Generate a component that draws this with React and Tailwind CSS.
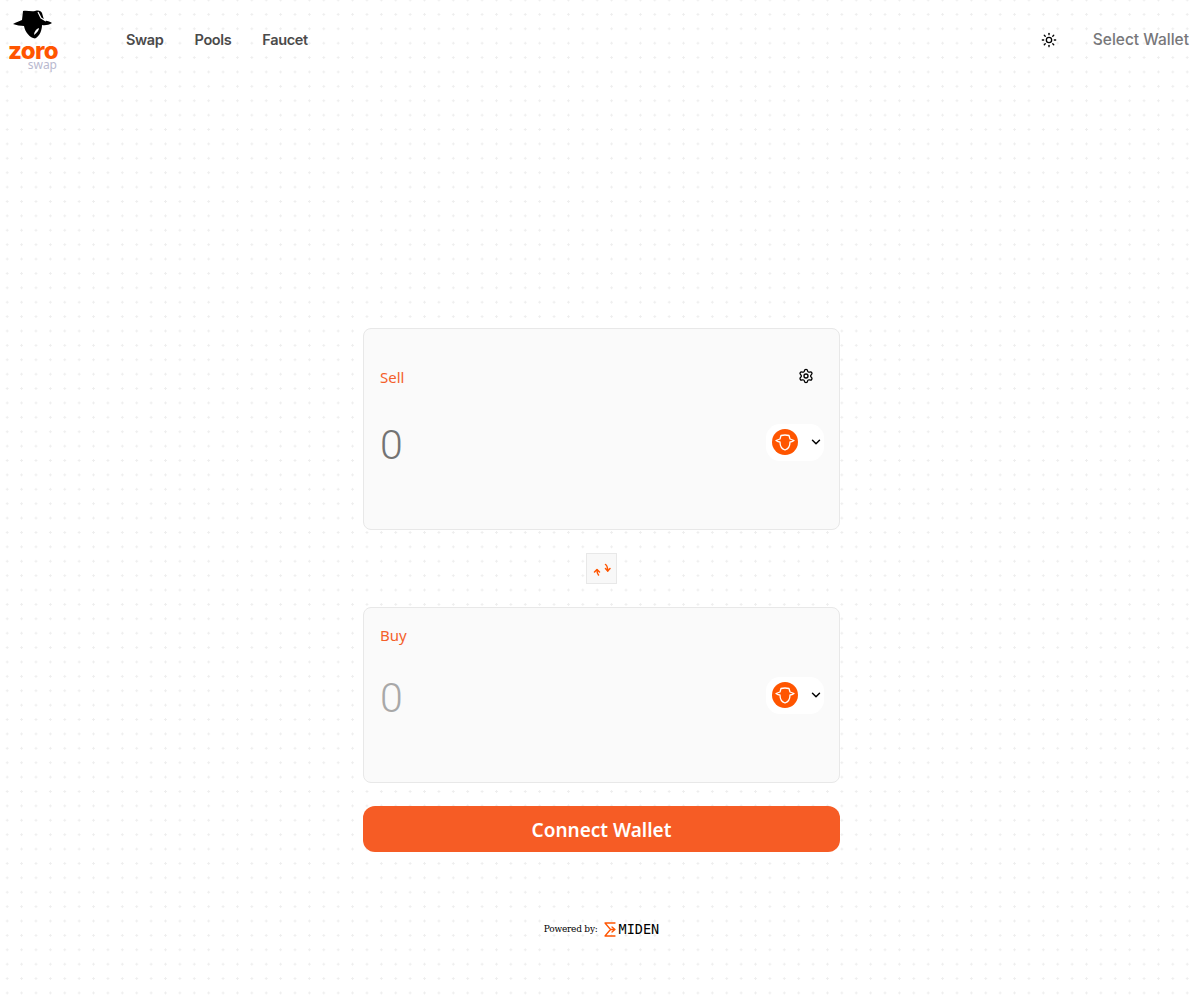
import React from 'react';
import { ChevronDown, Settings, Sun } from 'lucide-react';

function ZoroHead() {
    return (
        <svg width="40" height="29" viewBox="0 0 40 29">
            <path fill="#000" d="M10 1 C14 0 18 2 22 1 C26 0 28 1 29 3 L31 10 C34 11 37 11.5 39 13 C36 15 32 15.5 29 15 C29 20 27 26 22 28.5 C17 28 12 22 11 16 C8 16 3 15 0 14 C3 12 7 11 9 10 Z" />
            <path fill="none" stroke="#fff" strokeWidth="1.2" d="M25 2 L28 8 L33 11" />
            <path fill="#fff" d="M26 18 C26 20 24 23 21 25 C21 22 23 19 26 18 Z" />
        </svg>
    );
}

function TokenIcon() {
    return (
        <svg width="26" height="26" viewBox="0 0 26 26">
            <circle cx="13" cy="13" r="13" fill="#ff5500" />
            <path fill="none" stroke="#fff" strokeWidth="1.3" strokeLinejoin="round" d="M8 10 L9 6.5 C11 6 15 6 17 6.5 L18 10 L22 11.5 C20 13 19 13 18 13 C18 17 16 20 13 21 C10 20 8 17 8 13 C7 13 6 13 4 11.5 Z" />
        </svg>
    );
}

function TokenButton() {
    return (
        <button className="flex h-[37px] w-[58px] items-center rounded-[14px] bg-white pl-[6px]">
            <TokenIcon />
            <ChevronDown size={14} strokeWidth={2.5} className="ml-[11px] text-black" />
        </button>
    );
}

function SwapArrows() {
    return (
        <svg width="18" height="14" viewBox="0 0 18 14" fill="none" stroke="#ff5500" strokeWidth="1.5" strokeLinecap="round" strokeLinejoin="round">
            <path d="M1.5 10 L4 7.5 L6.5 10" />
            <path d="M4 8 C4 10 4.5 12 5.5 13" />
            <path d="M12.5 6.5 L14.7 9 L17 6.5" />
            <path d="M12.5 2.5 C14 3.5 14.7 6 14.7 9" />
        </svg>
    );
}

function MidenMark() {
    return (
        <svg width="12" height="15" viewBox="0 0 12 15" fill="none" stroke="#ff5500" strokeWidth="1.3" strokeLinecap="round" strokeLinejoin="round">
            <path d="M1 1 H11 M1 1 L6.5 7.5 L1 14 H11" />
            <path d="M8 5 L11 7.5 L8 10 M6.5 7.5 H11" />
        </svg>
    );
}

function App() {
    return (
        <div className="flex h-[996px] flex-col bg-white bg-[radial-gradient(#eeeeee_1px,transparent_1px)] bg-[size:14.4px_14.4px] bg-[position:0_-7.2px] font-['Noto_Sans',sans-serif]">
            <header className="flex h-[80px] items-center pr-[11px] pl-2">
                <div className="flex w-[50px] flex-col items-center">
                    <ZoroHead />
                    <span className="mt-[5px] font-['Inter',sans-serif] text-[24px] leading-[14px] font-extrabold tracking-tight text-[#ff5500]">zoro</span>
                    <span className="self-end pt-[1px] pr-[1px] text-[12px] leading-[11px] text-[#b9b9cf]">swap</span>
                </div>
                <nav className="ml-[68px] flex gap-[31px] font-['Inter',sans-serif] text-[14.5px] font-semibold tracking-tight text-[#4a4a4a]">
                    <a>Swap</a>
                    <a>Pools</a>
                    <a>Faucet</a>
                </nav>
                <Sun size={16} className="mr-[36px] ml-auto text-black" />
                <button className="font-['Inter',sans-serif] text-[15.5px] font-medium text-[#77777a]">Select Wallet</button>
            </header>

            <main className="mt-[248px] flex flex-col items-center pl-[3px]">
                <div className="h-[202px] w-[477px] rounded-lg border border-[#e8e8e8] bg-[#fafafa] pt-[38px] pr-[15px] pl-4">
                    <div className="flex items-center justify-between">
                        <span className="text-[15px] leading-5 text-[#f4602a]">Sell</span>
                        <Settings size={16} className="-mt-[2px] mr-[10px] text-black" />
                    </div>
                    <div className="mt-[26px] flex items-center justify-between">
                        <span className="translate-y-px pt-1 font-['Roboto',sans-serif] text-[41px] leading-[54px] font-light text-[#737373]">0</span>
                        <TokenButton />
                    </div>
                </div>

                <button className="my-[23px] flex h-[31px] w-[31px] items-center justify-center border border-[#e8e8e8] bg-[#f8f8f8]">
                    <SwapArrows />
                </button>

                <div className="h-[176px] w-[477px] rounded-lg border border-[#e8e8e8] bg-[#fafafa] pt-[17px] pr-[15px] pl-4">
                    <div className="text-[15px] leading-5 text-[#f4602a]">Buy</div>
                    <div className="mt-[21px] flex items-center justify-between">
                        <span className="translate-y-px pt-1 font-['Roboto',sans-serif] text-[41px] leading-[54px] font-light text-[#a8a8a8]">0</span>
                        <TokenButton />
                    </div>
                </div>

                <button className="mt-[23px] h-[46px] w-[477px] rounded-xl bg-[#f65c25] pt-[2px] text-[19px] font-semibold text-white">Connect Wallet</button>

                <div className="mt-[70px] flex items-center">
                    <span className="font-['DejaVu_Serif',serif] text-[9px] tracking-tight text-black">Powered by:</span>
                    <span className="ml-[6px]"><MidenMark /></span>
                    <span className="ml-[3px] font-['DejaVu_Sans_Mono',monospace] text-[13.5px] leading-none text-black">MIDEN</span>
                </div>
            </main>
        </div>
    );
}

export default App;
